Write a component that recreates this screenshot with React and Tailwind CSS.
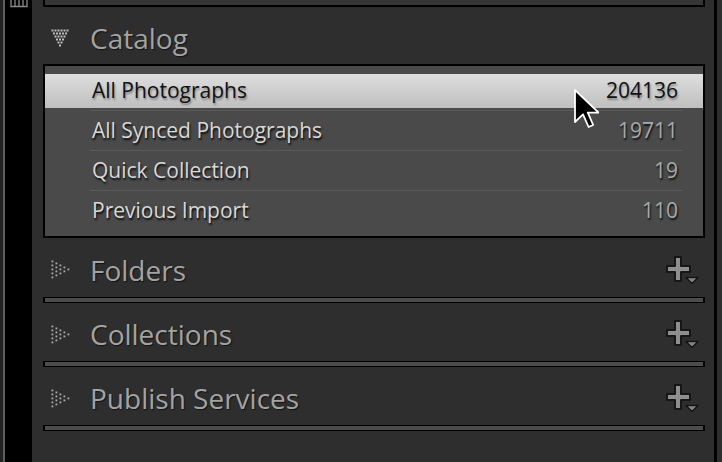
import React from 'react';

const rows = [
  { name: 'All Photographs', count: '204136', selected: true },
  { name: 'All Synced Photographs', count: '19711' },
  { name: 'Quick Collection', count: '19' },
  { name: 'Previous Import', count: '110' },
];

const DownDots = () => {
  const dots = [];
  for (let r = 0; r < 6; r++) {
    for (let i = 0; i < 6 - r; i++) {
      dots.push(<rect key={`${r}-${i}`} x={0.5 + 1.5 * r + 3 * i} y={0.5 + 3 * r} width="2" height="2" />);
    }
  }
  return (
    <svg width="18" height="18" viewBox="0 0 18 18" fill="#bdbdbd">
      {dots}
    </svg>
  );
};

const RightDots = () => {
  const dots = [];
  for (let c = 0; c < 5; c++) {
    for (let j = 0; j < 5 - c; j++) {
      dots.push(<rect key={`${c}-${j}`} x={0.5 + 4 * c} y={0.5 + 2 * c + 4 * j} width="1.8" height="1.8" />);
    }
  }
  return (
    <svg width="19" height="19" viewBox="0 0 19 19" fill="#ababab">
      {dots}
    </svg>
  );
};

const PlusMenu = () => (
  <svg width="33" height="30" viewBox="0 0 33 30">
    <path
      d="M9 2h6v9h9v6h-9v9h-6v-9h-8v-6h8z"
      fill="#8f8f8f"
      stroke="#161616"
      strokeWidth="2"
      strokeLinejoin="round"
    />
    <path d="M20 22.5h12l-6 6z" fill="#868686" stroke="#161616" strokeWidth="1.6" strokeLinejoin="round" />
  </svg>
);

const Cursor = () => (
  <svg width="26" height="42" viewBox="0 0 13 21" className="absolute left-[573px] top-[88px]">
    <path
      d="M1 1v16l4-3.8 2.8 6.3 2.3-1-2.7-6.2h5.4z"
      fill="#000"
      stroke="#fff"
      strokeWidth="0.9"
      strokeLinejoin="round"
    />
  </svg>
);

const SectionHeader = ({ title, open, plus, h }) => (
  <div className={`${h} flex items-center pt-[4px] pl-[8px] pr-[6px]`}>
    <div className="w-[39px] flex items-center">{open ? <DownDots /> : <RightDots />}</div>
    <span className="flex-1 text-[28px] leading-[28px] text-[#a3a3a3] [text-shadow:1px_1px_1px_rgba(0,0,0,0.6)]">
      {title}
    </span>
    {plus && <PlusMenu />}
  </div>
);

const Bar = () => <div className="h-[6px] border-x-2 border-y-[1.5px] border-black bg-[#4c4c4c]" />;

export default function App() {
  return (
    <div className="relative w-[722px] h-[462px] flex overflow-hidden bg-[#2e2e2e] font-['Open_Sans',sans-serif]">
      {/* left filmstrip edge */}
      <div className="w-[32px] flex shrink-0">
        <div className="w-[3px] bg-[#222]" />
        <div className="w-[1.5px] bg-[#5e5e5e]" />
        <div className="flex-1 bg-black pl-[5px]">
          <svg width="18" height="8" viewBox="0 0 18 8" stroke="#8a8a8a" strokeWidth="1.3">
            <path d="M1 0v6.5h16V0M5 0v6M9 0v6M13 0v6" fill="none" />
          </svg>
        </div>
      </div>

      {/* panel column */}
      <div className="w-[682px] shrink-0 flex flex-col pl-[11px] pr-[9px]">
        <div className="h-[7px] border-x-2 border-b-2 border-black bg-[#353535]" />

        <SectionHeader title="Catalog" open h="h-[57px]" />

        <div className="border-2 border-black bg-[#4a4a4a] pt-[8px] pb-[6px] text-[21px]">
          {rows.map((r, i) => (
            <React.Fragment key={r.name}>
              {i > 0 && <div className="ml-[45px] mr-[21px] h-px bg-[#5a5a5a]" />}
              {r.selected ? (
                <>
                  <div className="h-[34px] flex items-center justify-between pl-[47px] pr-[25px] bg-gradient-to-b from-[#dedede] to-[#bfbfbf] text-[#111] [text-shadow:1px_2px_2px_rgba(0,0,0,0.35)]">
                    <span>{r.name}</span>
                    <span>{r.count}</span>
                  </div>
                  <div className="h-[2px]" />
                </>
              ) : (
                <div className="h-[39px] flex items-center justify-between pl-[47px] pr-[25px] [text-shadow:1px_2px_2px_rgba(0,0,0,0.85)]">
                  <span className="text-[#d8d8d8]">{r.name}</span>
                  <span className="text-[#a9a9a9]">{r.count}</span>
                </div>
              )}
            </React.Fragment>
          ))}
        </div>

        <SectionHeader title="Folders" plus h="h-[59px]" />
        <Bar />
        <SectionHeader title="Collections" plus h="h-[58px]" />
        <Bar />
        <SectionHeader title="Publish Services" plus h="h-[58px]" />
        <Bar />
      </div>

      <div className="w-[3px] shrink-0 bg-black" />
      <div className="flex-1 bg-[#2e2e2e]" />

      <Cursor />
    </div>
  );
}
